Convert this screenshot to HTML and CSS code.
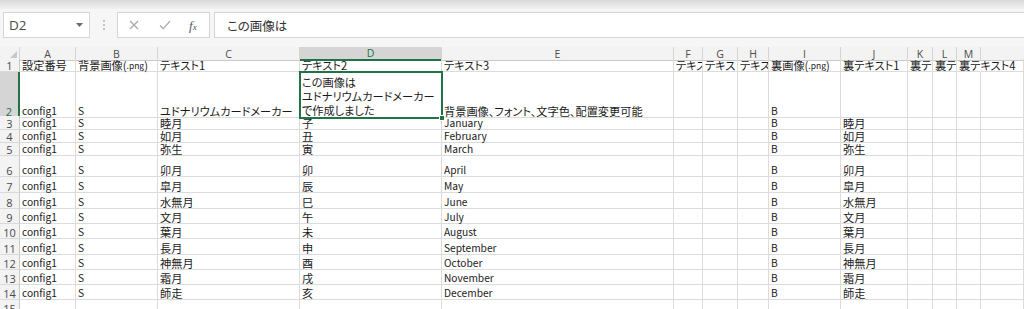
FILE: index.html
```html
<!DOCTYPE html>
<html lang="ja">
<head>
<meta charset="utf-8">
<title>Sheet</title>
<link rel="stylesheet" href="styles.css">
</head>
<body>
<div class="app">
  <div class="topstrip"></div>
  <div class="toolbar">
    <div class="namebox">
      <span class="nb-text">D2</span>
      <svg class="nb-arrow" width="7" height="4" viewBox="0 0 7 4"><path d="M0 0H7L3.5 4Z" fill="#6a6a6a"/></svg>
    </div>
    <div class="grip"><i></i><i></i><i></i></div>
    <div class="fbtns">
      <svg class="ico-x" width="10" height="10" viewBox="0 0 10 10"><path d="M1 1L9 9M9 1L1 9" stroke="#a6a6a6" stroke-width="1.2" fill="none"/></svg>
      <svg class="ico-ok" width="12" height="10" viewBox="0 0 12 10"><path d="M1 5.5L4.2 8.6L11 1.2" stroke="#a6a6a6" stroke-width="1.2" fill="none"/></svg>
      <span class="fx">f<span class="fx-x">x</span></span>
    </div>
    <div class="formula">この画像は</div>
  </div>

  <div class="sheet">
    <div class="row hdr">
      <div class="corner"><svg width="7" height="7" viewBox="0 0 7 7"><path d="M7 0V7H0Z" fill="#c8c8c8"/></svg></div>
      <div class="ch">A</div><div class="ch">B</div><div class="ch">C</div><div class="ch sel">D</div><div class="ch">E</div><div class="ch">F</div><div class="ch">G</div><div class="ch">H</div><div class="ch">I</div><div class="ch">J</div><div class="ch">K</div><div class="ch">L</div><div class="ch">M</div><div class="ch last"></div>
    </div>

    <div class="row r1">
      <div class="rh">1</div>
      <div class="c">設定番号</div><div class="c">背景画像(<span class="en sm">.png</span>)</div><div class="c">テキスト1</div><div class="c">テキスト2</div><div class="c">テキスト3</div><div class="c">テキスト4</div><div class="c">テキスト5</div><div class="c">テキスト6</div><div class="c">裏画像(<span class="en sm">.png</span>)</div><div class="c">裏テキスト1</div><div class="c">裏テキスト2</div><div class="c">裏テキスト3</div><div class="c spill">裏テキスト4</div><div class="c"></div>
    </div>

    <div class="row r2">
      <div class="rh sel">2</div>
      <div class="c"><span class="en">config1</span></div><div class="c"><span class="en">S</span></div><div class="c">ユドナリウムカードメーカー</div><div class="c wrap active">この画像は<br>ユドナリウムカードメーカー<br>で作成しました<span class="handle"></span></div><div class="c">背景画像、フォント、文字色、配置変更可能</div><div class="c"></div><div class="c"></div><div class="c"></div><div class="c"><span class="en">B</span></div><div class="c"></div><div class="c"></div><div class="c"></div><div class="c"></div><div class="c"></div>
    </div>

    <div class="row r3">
      <div class="rh">3</div>
      <div class="c"><span class="en">config1</span></div><div class="c"><span class="en">S</span></div><div class="c">睦月</div><div class="c">子</div><div class="c"><span class="en">January</span></div><div class="c"></div><div class="c"></div><div class="c"></div><div class="c"><span class="en">B</span></div><div class="c">睦月</div><div class="c"></div><div class="c"></div><div class="c"></div><div class="c"></div>
    </div>
    <div class="row r4">
      <div class="rh">4</div>
      <div class="c"><span class="en">config1</span></div><div class="c"><span class="en">S</span></div><div class="c">如月</div><div class="c">丑</div><div class="c"><span class="en">February</span></div><div class="c"></div><div class="c"></div><div class="c"></div><div class="c"><span class="en">B</span></div><div class="c">如月</div><div class="c"></div><div class="c"></div><div class="c"></div><div class="c"></div>
    </div>
    <div class="row r5">
      <div class="rh">5</div>
      <div class="c"><span class="en">config1</span></div><div class="c"><span class="en">S</span></div><div class="c">弥生</div><div class="c">寅</div><div class="c"><span class="en">March</span></div><div class="c"></div><div class="c"></div><div class="c"></div><div class="c"><span class="en">B</span></div><div class="c">弥生</div><div class="c"></div><div class="c"></div><div class="c"></div><div class="c"></div>
    </div>
    <div class="row r6">
      <div class="rh">6</div>
      <div class="c"><span class="en">config1</span></div><div class="c"><span class="en">S</span></div><div class="c">卯月</div><div class="c">卯</div><div class="c"><span class="en">April</span></div><div class="c"></div><div class="c"></div><div class="c"></div><div class="c"><span class="en">B</span></div><div class="c">卯月</div><div class="c"></div><div class="c"></div><div class="c"></div><div class="c"></div>
    </div>
    <div class="row r7">
      <div class="rh">7</div>
      <div class="c"><span class="en">config1</span></div><div class="c"><span class="en">S</span></div><div class="c">皐月</div><div class="c">辰</div><div class="c"><span class="en">May</span></div><div class="c"></div><div class="c"></div><div class="c"></div><div class="c"><span class="en">B</span></div><div class="c">皐月</div><div class="c"></div><div class="c"></div><div class="c"></div><div class="c"></div>
    </div>
    <div class="row r8">
      <div class="rh">8</div>
      <div class="c"><span class="en">config1</span></div><div class="c"><span class="en">S</span></div><div class="c">水無月</div><div class="c">巳</div><div class="c"><span class="en">June</span></div><div class="c"></div><div class="c"></div><div class="c"></div><div class="c"><span class="en">B</span></div><div class="c">水無月</div><div class="c"></div><div class="c"></div><div class="c"></div><div class="c"></div>
    </div>
    <div class="row r9">
      <div class="rh">9</div>
      <div class="c"><span class="en">config1</span></div><div class="c"><span class="en">S</span></div><div class="c">文月</div><div class="c">午</div><div class="c"><span class="en">July</span></div><div class="c"></div><div class="c"></div><div class="c"></div><div class="c"><span class="en">B</span></div><div class="c">文月</div><div class="c"></div><div class="c"></div><div class="c"></div><div class="c"></div>
    </div>
    <div class="row r10">
      <div class="rh">10</div>
      <div class="c"><span class="en">config1</span></div><div class="c"><span class="en">S</span></div><div class="c">葉月</div><div class="c">未</div><div class="c"><span class="en">August</span></div><div class="c"></div><div class="c"></div><div class="c"></div><div class="c"><span class="en">B</span></div><div class="c">葉月</div><div class="c"></div><div class="c"></div><div class="c"></div><div class="c"></div>
    </div>
    <div class="row r11">
      <div class="rh">11</div>
      <div class="c"><span class="en">config1</span></div><div class="c"><span class="en">S</span></div><div class="c">長月</div><div class="c">申</div><div class="c"><span class="en">September</span></div><div class="c"></div><div class="c"></div><div class="c"></div><div class="c"><span class="en">B</span></div><div class="c">長月</div><div class="c"></div><div class="c"></div><div class="c"></div><div class="c"></div>
    </div>
    <div class="row r12">
      <div class="rh">12</div>
      <div class="c"><span class="en">config1</span></div><div class="c"><span class="en">S</span></div><div class="c">神無月</div><div class="c">酉</div><div class="c"><span class="en">October</span></div><div class="c"></div><div class="c"></div><div class="c"></div><div class="c"><span class="en">B</span></div><div class="c">神無月</div><div class="c"></div><div class="c"></div><div class="c"></div><div class="c"></div>
    </div>
    <div class="row r13">
      <div class="rh">13</div>
      <div class="c"><span class="en">config1</span></div><div class="c"><span class="en">S</span></div><div class="c">霜月</div><div class="c">戌</div><div class="c"><span class="en">November</span></div><div class="c"></div><div class="c"></div><div class="c"></div><div class="c"><span class="en">B</span></div><div class="c">霜月</div><div class="c"></div><div class="c"></div><div class="c"></div><div class="c"></div>
    </div>
    <div class="row r14">
      <div class="rh">14</div>
      <div class="c"><span class="en">config1</span></div><div class="c"><span class="en">S</span></div><div class="c">師走</div><div class="c">亥</div><div class="c"><span class="en">December</span></div><div class="c"></div><div class="c"></div><div class="c"></div><div class="c"><span class="en">B</span></div><div class="c">師走</div><div class="c"></div><div class="c"></div><div class="c"></div><div class="c"></div>
    </div>
    <div class="row r15">
      <div class="rh">15</div>
      <div class="c"></div><div class="c"></div><div class="c"></div><div class="c"></div><div class="c"></div><div class="c"></div><div class="c"></div><div class="c"></div><div class="c"></div><div class="c"></div><div class="c"></div><div class="c"></div><div class="c"></div><div class="c"></div>
    </div>
  </div>
</div>
</body>
</html>
```

FILE: styles.css
```css
* { box-sizing: border-box; }
html, body { margin: 0; padding: 0; }
body {
  width: 1024px;
  height: 309px;
  overflow: hidden;
  background: #ffffff;
  font-family: "Noto Sans CJK JP", "Noto Sans", sans-serif;
}
.app { width: 1024px; }

.topstrip {
  height: 9px;
  background: linear-gradient(#d9d9d9, #f1f1f1);
}
.toolbar {
  height: 38px;
  background: #f6f6f6;
  display: flex;
  align-items: flex-start;
  padding: 3px 0 0 3px;
}
.namebox {
  width: 87px;
  height: 26px;
  background: #fff;
  border: 1px solid #d6d6d6;
  display: flex;
  align-items: center;
  padding-left: 5px;
}
.nb-text {
  font-family: "Open Sans", "Noto Sans", sans-serif;
  font-size: 13.5px;
  color: #4a4a4a;
}
.nb-arrow { margin-left: auto; margin-right: 6px; }
.grip {
  width: 27px;
  height: 26px;
  display: flex;
  flex-direction: column;
  align-items: center;
  justify-content: center;
  gap: 2px;
}
.grip i {
  width: 2px;
  height: 2px;
  background: #c3c3c3;
  display: block;
}
.fbtns {
  width: 93px;
  height: 26px;
  background: #fff;
  border: 1px solid #d6d6d6;
  display: flex;
  align-items: center;
  padding-left: 11px;
}
.ico-x { margin-right: 20px; }
.ico-ok { margin-right: 18px; }
.fx {
  font-family: "Liberation Serif", "DejaVu Serif", serif;
  font-style: italic;
  font-size: 13px;
  color: #555;
  line-height: 1;
}
.fx-x { font-size: 9px; }
.formula {
  flex: 1;
  height: 26px;
  margin-left: 4px;
  background: #fff;
  border: 1px solid #d6d6d6;
  border-right: none;
  display: flex;
  align-items: center;
  padding-left: 12px;
  font-size: 12.5px;
  color: #333;
  font-feature-settings: "palt";
}

.sheet { background: #fff; }
.row {
  display: grid;
  grid-template-columns: 20px 56px 82px 142px 142px 232px 29px 35px 31px 72px 67px 25px 24px 24px 43px;
}
.hdr { height: 12px; }
.r1 { height: 13px; }
.r2 { height: 44px; }
.r3 { height: 14px; }
.r4 { height: 13px; }
.r5 { height: 13px; }
.r6 { height: 21px; }
.r7 { height: 16px; }
.r8 { height: 16px; }
.r9 { height: 15px; }
.r10 { height: 15px; }
.r11 { height: 16px; }
.r12 { height: 15px; }
.r13 { height: 15px; }
.r14 { height: 15px; }
.r15 { height: 15px; }

.corner, .ch, .rh {
  background: #f3f3f3;
  color: #4b4b4b;
  font-family: "Open Sans", "Noto Sans", sans-serif;
  font-size: 10.5px;
  line-height: 1;
  display: flex;
  justify-content: center;
  border-right: 1px solid #d4d4d4;
  border-bottom: 1px solid #c9c9c9;
}
.corner {
  align-items: flex-end;
  justify-content: flex-end;
  padding: 0 2px 2px 0;
}
.ch { align-items: center; padding-top: 1px; }
.ch.last { border-right: none; }
.ch.sel {
  background: #d5d5d5;
  border-bottom: 2px solid #217346;
  color: #217346;
}
.rh {
  font-size: 11px;
  align-items: flex-end;
  border-bottom: 1px solid #dadada;
  border-right: 1px solid #c9c9c9;
}
.rh.sel {
  background: #d5d5d5;
  border-right: 2px solid #217346;
  color: #217346;
}

.c {
  border-right: 1px solid #dcdcdc;
  border-bottom: 1px solid #dcdcdc;
  overflow-x: clip;
  overflow-y: visible;
  white-space: nowrap;
  display: flex;
  align-items: flex-end;
  padding: 0 2px;
  font-size: 11.2px;
  line-height: 12px;
  color: #1a1a1a;
  font-feature-settings: "palt";
}
.en { font-size: 10.2px; }
.en.sm { font-size: 8.5px; }
.c.spill { overflow: visible; border-right-color: transparent; }
.c.wrap {
  display: block;
  white-space: normal;
  padding-top: 3px;
  line-height: 14px;
}
.c.active {
  position: relative;
  overflow: visible;
  outline: 2px solid #217346;
  outline-offset: -1px;
  z-index: 2;
}
.handle {
  position: absolute;
  right: -4px;
  bottom: -4px;
  width: 6px;
  height: 6px;
  background: #217346;
  border: 1px solid #fff;
}
```
